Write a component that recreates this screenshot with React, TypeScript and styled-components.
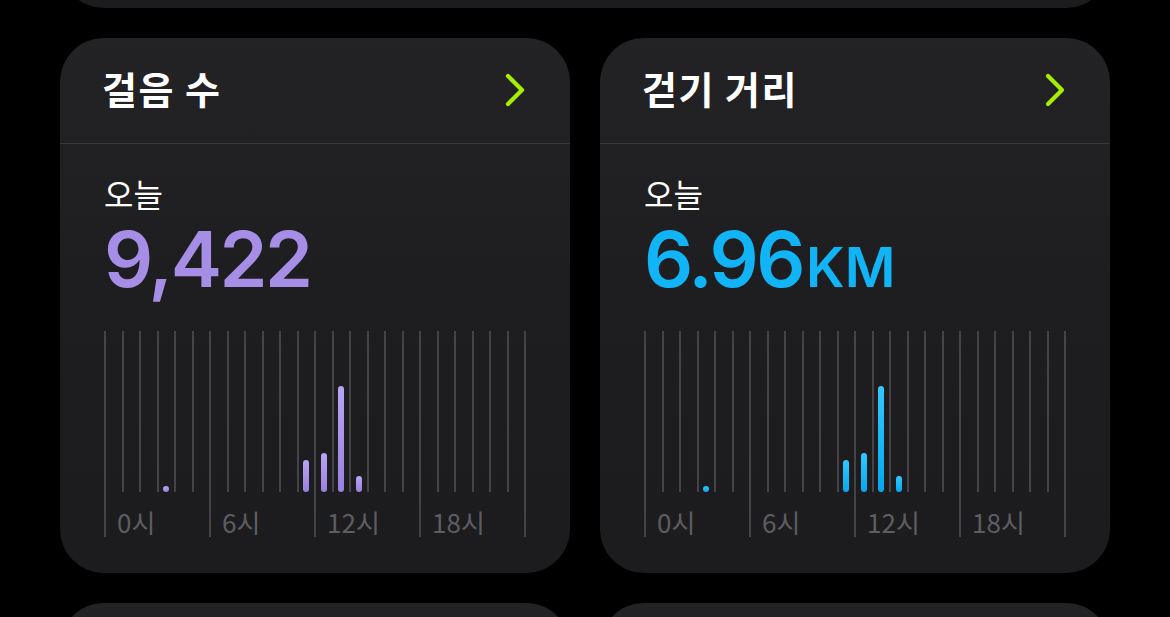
import styled, { createGlobalStyle } from "styled-components";

const GlobalStyle = createGlobalStyle`
  html, body {
    margin: 0;
    padding: 0;
    background: #000;
    overflow: hidden;
  }
  body {
    font-family: "Noto Sans CJK KR", "Noto Sans", sans-serif;
  }
`;

const Page = styled.div`
  display: flex;
  flex-direction: column;
  gap: 30px;
  padding: 0 60px;
  margin-top: -92px;
`;

const Row = styled.div`
  display: grid;
  grid-template-columns: 1fr 1fr;
  gap: 30px;
`;

const Card = styled.section<{ $height: number }>`
  height: ${(p) => p.$height}px;
  border-radius: 44px;
  background: linear-gradient(180deg, #232325 0%, #1e1e20 45%, #1c1c1e 100%);
  overflow: hidden;
  display: flex;
  flex-direction: column;
`;

const Header = styled.header`
  height: 99px;
  display: flex;
  align-items: center;
  justify-content: space-between;
  padding: 0 43px 6px 42px;
  border-bottom: 1px solid #3a3a3c;
`;

const Title = styled.h2`
  margin: 0;
  font-size: 38px;
  font-weight: 700;
  color: #fff;
  line-height: 1;
  letter-spacing: 1.5px;
`;

const ChevronBox = styled.svg`
  margin-top: 4px;
`;

const Body = styled.div`
  display: flex;
  flex-direction: column;
  padding: 33px 44px 0 44px;
`;

const Today = styled.div`
  font-size: 32px;
  line-height: 1;
  color: #fff;
`;

const Value = styled.div<{ $color: string }>`
  margin-top: 12px;
  font-family: Inter, "Noto Sans", sans-serif;
  font-size: 77px;
  font-weight: 600;
  line-height: 1;
  color: ${(p) => p.$color};
  letter-spacing: -2.5px;
`;

const Unit = styled.span`
  font-size: 55px;
  font-weight: 600;
  letter-spacing: 0;
  margin-left: 3px;
`;

const Chart = styled.div`
  display: grid;
  grid-template-columns: repeat(24, minmax(0, 1fr)) 2px;
  height: 206px;
  margin-top: 33px;
`;

const Slot = styled.div<{ $major: boolean }>`
  display: flex;
  flex-direction: column;
  border-left: 2px solid ${(p) => (p.$major ? "#444447" : "transparent")};
`;

const Plot = styled.div<{ $major: boolean }>`
  height: 161px;
  display: flex;
  align-items: flex-end;
  justify-content: center;
  margin-left: ${(p) => (p.$major ? "0" : "-2px")};
  border-left: ${(p) => (p.$major ? "none" : "2px solid #444447")};
`;

const Bar = styled.div<{ $from: string; $to: string }>`
  width: 6px;
  border-radius: 3px;
  background: linear-gradient(180deg, ${(p) => p.$from}, ${(p) => p.$to});
`;

const HourLabel = styled.span`
  margin-top: 17px;
  padding-left: 11px;
  white-space: nowrap;
  font-size: 26px;
  line-height: 1;
  color: #5d5d61;
`;

const EndLine = styled.div`
  background: #444447;
`;

const bars: Record<number, number> = { 3: 6, 11: 32, 12: 39, 13: 106, 14: 16 };

function Chevron() {
  return (
    <ChevronBox width="24" height="36" viewBox="0 0 24 36">
      <path
        d="M5 4 L19 18 L5 32"
        fill="none"
        stroke="#a5f000"
        strokeWidth="4.2"
        strokeLinecap="round"
        strokeLinejoin="round"
      />
    </ChevronBox>
  );
}

interface MetricProps {
  title: string;
  value: string;
  unit?: string;
  color: string;
  from: string;
  to: string;
}

function MetricCard({ title, value, unit, color, from, to }: MetricProps) {
  return (
    <Card $height={535}>
      <Header>
        <Title>{title}</Title>
        <Chevron />
      </Header>
      <Body>
        <Today>오늘</Today>
        <Value $color={color}>
          {value}
          {unit && <Unit>{unit}</Unit>}
        </Value>
        <Chart>
          {Array.from({ length: 24 }, (_, h) => {
            const major = h % 6 === 0;
            return (
              <Slot key={h} $major={major}>
                <Plot $major={major}>
                  {bars[h] && (
                    <Bar $from={from} $to={to} style={{ height: bars[h] }} />
                  )}
                </Plot>
                {major && <HourLabel>{h}시</HourLabel>}
              </Slot>
            );
          })}
          <EndLine />
        </Chart>
      </Body>
    </Card>
  );
}

export default function App() {
  return (
    <>
      <GlobalStyle />
      <Page>
        <Card $height={100} />
        <Row>
          <MetricCard
            title="걸음 수"
            value="9,422"
            color="#a68ee6"
            from="#b9a4f4"
            to="#9a80df"
          />
          <MetricCard
            title="걷기 거리"
            value="6.96"
            unit="KM"
            color="#12b4f8"
            from="#32c8ff"
            to="#03a8ef"
          />
        </Row>
        <Row>
          <Card $height={200} />
          <Card $height={200} />
        </Row>
      </Page>
    </>
  );
}
